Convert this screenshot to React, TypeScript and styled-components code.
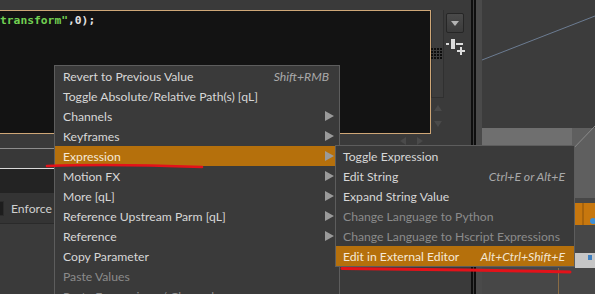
import React from 'react'
import styled, { createGlobalStyle } from 'styled-components'

const GlobalStyle = createGlobalStyle`
  html, body {
    margin: 0;
    padding: 0;
    width: 595px;
    height: 294px;
    overflow: hidden;
    background: #3a3a3a;
  }
  #root {
    width: 595px;
    height: 294px;
  }
`

const UI_FONT = `Lato, "Noto Sans", sans-serif`

type Item = {
  label: string
  shortcut?: string
  sub?: boolean
  active?: boolean
  disabled?: boolean
}

const mainItems: Item[] = [
  { label: 'Revert to Previous Value', shortcut: 'Shift+RMB' },
  { label: 'Toggle Absolute/Relative Path(s) [qL]' },
  { label: 'Channels', sub: true },
  { label: 'Keyframes', sub: true },
  { label: 'Expression', sub: true, active: true },
  { label: 'Motion FX', sub: true },
  { label: 'More [qL]', sub: true },
  { label: 'Reference Upstream Parm [qL]', sub: true },
  { label: 'Reference', sub: true },
  { label: 'Copy Parameter' },
  { label: 'Paste Values', disabled: true },
  { label: 'Paste Expressions / Channels', disabled: true },
]

const subItems: Item[] = [
  { label: 'Toggle Expression' },
  { label: 'Edit String', shortcut: 'Ctrl+E or Alt+E' },
  { label: 'Expand String Value' },
  { label: 'Change Language to Python', disabled: true },
  { label: 'Change Language to Hscript Expressions', disabled: true },
  { label: 'Edit in External Editor', shortcut: 'Alt+Ctrl+Shift+E', active: true },
]

const Screen = styled.div`
  position: relative;
  display: flex;
  width: 595px;
  height: 294px;
  overflow: hidden;
  background: #3a3a3a;
  font-family: ${UI_FONT};
`

const LeftPane = styled.div`
  display: flex;
  flex-direction: column;
  width: 471px;
  flex: none;
`

const TopBar = styled.div`
  height: 10px;
  flex: none;
`

const EditorRow = styled.div`
  display: flex;
  height: 124px;
  flex: none;
`

// code box, its left edge is scrolled out of view
const Editor = styled.div`
  width: 430px;
  height: 119px;
  padding-top: 3px;
  background: #131313;
  border: 1px solid #cfa777;
  border-left: none;
`

const Code = styled.div`
  font-family: "DejaVu Sans Mono", monospace;
  font-size: 11.3px;
  font-weight: bold;
  line-height: 14px;
  color: #e2e2e2;
  white-space: pre;
`

const Str = styled.span`
  color: #72cf52;
`

const VScroll = styled.div`
  display: flex;
  flex-direction: column;
  width: 13px;
  flex: none;
`

const Track = styled.div`
  height: 87px;
  background: #3d3d3d;
  border: 1px solid #303030;
  border-top: none;
  display: flex;
  align-items: center;
  justify-content: center;
`

const Grip = styled.div`
  display: grid;
  grid-template-columns: repeat(4, 2px);
  gap: 1px;
  margin-left: -2px;
  span {
    width: 2px;
    height: 2px;
    background: #0d0d0d;
  }
`

type Dir = 'up' | 'down' | 'left' | 'right'

const arrowBorders: Record<Dir, string> = {
  up: 'border-left: 4px solid transparent; border-right: 4px solid transparent; border-bottom: 6px solid #4a4a4a;',
  down: 'border-left: 4px solid transparent; border-right: 4px solid transparent; border-top: 6px solid #4a4a4a;',
  left: 'border-top: 4px solid transparent; border-bottom: 4px solid transparent; border-right: 6px solid #4a4a4a;',
  right: 'border-top: 4px solid transparent; border-bottom: 4px solid transparent; border-left: 6px solid #4a4a4a;',
}

const FadedArrow = styled.div<{ $dir: Dir }>`
  width: 0;
  height: 0;
  margin: ${(p) => (p.$dir === 'up' ? '7px auto 0' : p.$dir === 'down' ? '10px auto 0' : '0')};
  ${(p) => arrowBorders[p.$dir]}
`

const SideTools = styled.div`
  display: flex;
  flex-direction: column;
  align-items: flex-start;
  margin-left: 2px;
  padding-top: 3px;
  gap: 6px;
`

const DropButton = styled.div`
  width: 16px;
  height: 18px;
  border: 1px solid #262626;
  border-radius: 2px;
  background: linear-gradient(#4a4a4a, #3b3b3b);
  display: flex;
  align-items: center;
  justify-content: center;
  &::after {
    content: '';
    border-left: 4px solid transparent;
    border-right: 4px solid transparent;
    border-top: 5px solid #b4b4b4;
  }
`

const HScrollRow = styled.div`
  display: flex;
  align-items: center;
  gap: 11px;
  height: 14px;
  padding-left: 400px;
  flex: none;
`

const Field = styled.div`
  height: 19px;
  flex: none;
  background: #383838;
  border-top: 1px solid #8c8c8c;
  border-bottom: 1px solid #dadada;
`

const DarkBar = styled.div`
  height: 24px;
  flex: none;
  background: #232323;
`

const ToggleRow = styled.div`
  display: flex;
  align-items: center;
  gap: 7px;
  height: 30px;
  flex: none;
  background: #343434;
  border-bottom: 1px solid #2a2a2a;
`

const Check = styled.div`
  width: 3px;
  height: 13px;
  background: #1d1d1d;
  border: 1px solid #2b2b2b;
  border-left: none;
`

const ToggleLabel = styled.span`
  font-size: 12.2px;
  color: #cfcfcf;
`

const Divider = styled.div`
  width: 1px;
  flex: none;
  border-left: 2px solid #0e0e0e;
  border-right: 2px solid #0e0e0e;
  background: #3e3e3e;
`

const SideStrip = styled.div`
  width: 6px;
  flex: none;
  background: #4a4a4a;
`

const Viewport = styled.div`
  flex: 1;
  background: #3c3c3c;
  svg {
    display: block;
  }
`

const MenuBox = styled.div<{ $left: number; $top: number; $width: number; $padL: number; $padR: number }>`
  position: absolute;
  left: ${(p) => p.$left}px;
  top: ${(p) => p.$top}px;
  width: ${(p) => p.$width}px;
  box-sizing: border-box;
  background: #3a3a3a;
  border: 1px solid #5d5d5d;
  --pad-l: ${(p) => p.$padL}px;
  --pad-r: ${(p) => p.$padR}px;
`

const Row = styled.div<{ $active?: boolean; $disabled?: boolean }>`
  display: flex;
  align-items: center;
  height: 20px;
  padding: 0 var(--pad-r) 0 var(--pad-l);
  font-size: 12.2px;
  white-space: nowrap;
  color: ${(p) => (p.$active ? '#f6e9d6' : p.$disabled ? '#8b8b8b' : '#d7d7d7')};
  background: ${(p) => (p.$active ? '#b5700c' : 'transparent')};
`

const Label = styled.span`
  flex: 1;
`

const Shortcut = styled.span<{ $active?: boolean }>`
  font-style: italic;
  color: ${(p) => (p.$active ? '#f3e5d0' : '#a9a9a9')};
  margin-right: 5px;
`

const SubArrow = styled.span`
  width: 0;
  height: 0;
  border-top: 5px solid transparent;
  border-bottom: 5px solid transparent;
  border-left: 9px solid #9a9a9a;
`

// red hand-drawn underlines on top of the screenshot
const Marks = styled.svg`
  position: absolute;
  left: 0;
  top: 0;
  pointer-events: none;
`

const Menu = ({ items, left, top, width, padL, padR }: { items: Item[]; left: number; top: number; width: number; padL: number; padR: number }) => (
  <MenuBox $left={left} $top={top} $width={width} $padL={padL} $padR={padR}>
    {items.map((it) => (
      <Row key={it.label} $active={it.active} $disabled={it.disabled}>
        <Label>{it.label}</Label>
        {it.shortcut && <Shortcut $active={it.active}>{it.shortcut}</Shortcut>}
        {it.sub && <SubArrow />}
      </Row>
    ))}
  </MenuBox>
)

const PlusMinusIcon = () => (
  <svg width="20" height="17" viewBox="0 0 20 17">
    <rect x="0" y="4" width="3" height="2" fill="#dcdcdc" />
    <rect x="5" y="0" width="4" height="10" fill="#dcdcdc" />
    <rect x="10" y="4" width="7" height="2" fill="#dcdcdc" />
    <rect x="11" y="11" width="8" height="2" fill="#dcdcdc" />
    <rect x="14" y="8" width="2" height="8" fill="#dcdcdc" />
  </svg>
)

const ViewportDrawing = () => (
  <svg width="113" height="294" viewBox="0 0 113 294">
    <rect x="0" y="0" width="113" height="294" fill="#3c3c3c" />
    <line x1="0" y1="60" x2="113" y2="16" stroke="#6c7c92" strokeWidth="1" />
    <rect x="0" y="128" width="113" height="70" fill="#6f6f6f" />
    <rect x="90" y="128" width="23" height="70" fill="#5f5f5f" />
    <line x1="88" y1="152" x2="113" y2="126" stroke="#8a8a8a" strokeWidth="1" />
    <rect x="0" y="198" width="113" height="96" fill="#474747" />
    <rect x="93" y="203" width="20" height="22" fill="#c7770e" />
    <line x1="101" y1="203" x2="101" y2="225" stroke="#8a520a" strokeWidth="1" />
    <circle cx="111" cy="221" r="3" fill="#3f8fd6" />
    <rect x="93" y="253" width="20" height="15" fill="#c6c6c6" />
    <rect x="106" y="255" width="4" height="5" fill="#3f80c0" />
    <line x1="76.5" y1="268" x2="76.5" y2="294" stroke="#8a6b44" strokeWidth="1" />
  </svg>
)

export default function App() {
  return (
    <>
      <GlobalStyle />
      <Screen>
        <LeftPane>
          <TopBar />
          <EditorRow>
            <Editor>
              <Code>
                <Str>transform"</Str>,0);
              </Code>
            </Editor>
            <VScroll>
              <Track>
                <Grip>
                  {Array.from({ length: 16 }).map((_, i) => (
                    <span key={i} />
                  ))}
                </Grip>
              </Track>
              <FadedArrow $dir="up" />
              <FadedArrow $dir="down" />
            </VScroll>
            <SideTools>
              <DropButton />
              <PlusMinusIcon />
            </SideTools>
          </EditorRow>
          <HScrollRow>
            <FadedArrow $dir="left" />
            <FadedArrow $dir="right" />
          </HScrollRow>
          <Field />
          <DarkBar />
          <ToggleRow>
            <Check />
            <ToggleLabel>Enforce Prototypes</ToggleLabel>
          </ToggleRow>
        </LeftPane>
        <Divider />
        <SideStrip />
        <Viewport>
          <ViewportDrawing />
        </Viewport>
        <Menu items={mainItems} left={54} top={65} width={286} padL={8} padR={5} />
        <Menu items={subItems} left={335} top={145} width={240} padL={7} padR={4} />
        <Marks width="595" height="294" viewBox="0 0 595 294">
          <path d="M47 166 Q110 163.5 202 167" stroke="#e3121a" strokeWidth="2.6" fill="none" strokeLinecap="round" />
          <path d="M342 268.5 Q450 269.5 570 272" stroke="#e3121a" strokeWidth="3" fill="none" strokeLinecap="round" />
        </Marks>
      </Screen>
    </>
  )
}
